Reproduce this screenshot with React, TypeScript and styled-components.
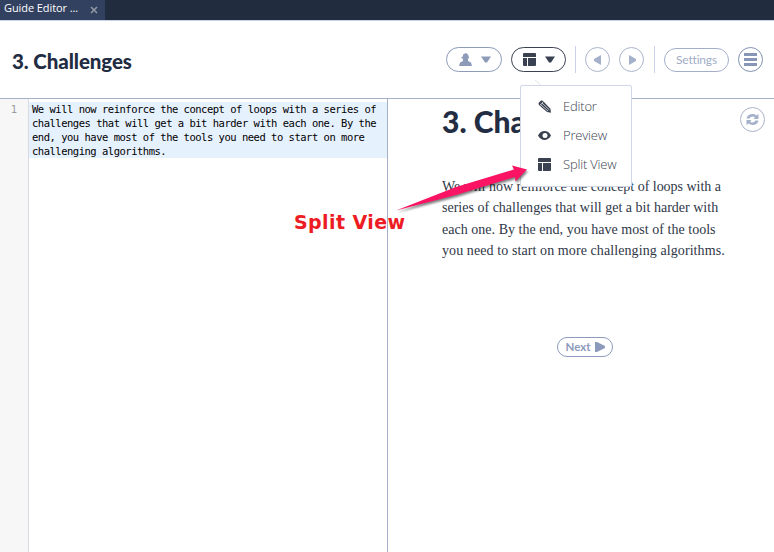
import React from "react";
import styled, { createGlobalStyle, css } from "styled-components";

const Global = createGlobalStyle`
  * { box-sizing: border-box; }
  body { margin: 0; background: #fff; overflow: hidden; }
`;

const Page = styled.div`
  position: relative;
  display: flex;
  flex-direction: column;
  width: 774px;
  height: 552px;
  background: #fff;
  font-family: "Open Sans", sans-serif;
`;

const TabBar = styled.nav`
  height: 21px;
  display: flex;
  background: #222c3f;
  border-bottom: 1px solid #c9d2ea;
`;

const Tab = styled.div`
  width: 105px;
  height: 20px;
  padding: 0 7px 4px 4px;
  display: flex;
  align-items: center;
  justify-content: space-between;
  background: #32415f;
  color: #fff;
  font-size: 11px;
  line-height: 16px;
  white-space: nowrap;
  letter-spacing: -0.08px;
`;

const CloseIcon = styled.svg`
  width: 8px;
  height: 8px;
  margin-top: 3px;
  stroke: #949aa5;
  stroke-width: 1.5;
`;

const Header = styled.header`
  height: 78px;
  padding: 0 11px 0 12px;
  display: flex;
  align-items: center;
  justify-content: space-between;
  border-bottom: 1px solid #a5b0c8;
`;

const Title = styled.h1`
  margin: 2px 0 0;
  color: #222c42;
  font: 900 20.5px/26px Lato, sans-serif;
  letter-spacing: -0.1px;
  white-space: nowrap;
`;

const Toolbar = styled.div`
  height: 27px;
  display: flex;
  align-items: center;
`;

const Pill = styled.button<{ $active?: boolean; $width: number; $gap?: number }>`
  position: relative;
  width: ${(p) => p.$width}px;
  height: 25px;
  padding: 0 0 0 1px;
  margin-right: ${(p) => p.$gap ?? 9}px;
  display: flex;
  align-items: center;
  justify-content: center;
  gap: 9px;
  border: 1px solid ${(p) => (p.$active ? "#3a4150" : "#8d9bb8")};
  border-radius: 13px;
  background: #fff;
  color: ${(p) => (p.$active ? "#3a4150" : "#8d9bb8")};
`;

const Round = styled.button<{ $gap?: number; $strong?: boolean }>`
  flex: none;
  width: 25px;
  height: 25px;
  padding: 0;
  margin-right: ${(p) => p.$gap ?? 0}px;
  display: flex;
  align-items: center;
  justify-content: center;
  border: 1px solid ${(p) => (p.$strong ? "#8290b0" : "#a9b4cb")};
  border-radius: 50%;
  background: #fff;
  color: ${(p) => (p.$strong ? "#8796b7" : "#a5b1ca")};
`;

const Divider = styled.span`
  width: 1px;
  height: 27px;
  margin-right: 9px;
  background: #c9d2ea;
`;

const outlined = css`
  padding: 0;
  border: 1px solid #a3afc8;
  background: #fff;
  color: #a0acc5;
  white-space: nowrap;
`;

const SettingsButton = styled.button`
  ${outlined}
  width: 65px;
  height: 24px;
  margin-right: 9px;
  border-radius: 12px;
  font: 400 12px/20px Lato, sans-serif;
  letter-spacing: -0.2px;
`;

const NextButton = styled.button`
  ${outlined}
  width: 56px;
  height: 20px;
  display: flex;
  align-items: center;
  justify-content: center;
  gap: 4px;
  border-color: #8c9abb;
  border-radius: 10px;
  color: #8c9abb;
  font: 700 11.5px/16px Lato, sans-serif;
`;

const Icon = styled.svg`
  display: block;
  flex: none;
  fill: currentColor;
`;

const Workspace = styled.main`
  flex: 1;
  display: flex;
`;

const Editor = styled.section`
  width: 388px;
  display: flex;
  border-right: 1px solid #a5b0c8;
`;

const Gutter = styled.div`
  width: 29px;
  padding: 3px 11px 0 0;
  border-right: 1px solid #d9dbe0;
  background: #f7f7f7;
  color: #9a9a9a;
  text-align: right;
  font: 10.5px/14px "DejaVu Sans Mono", monospace;
`;

const Code = styled.pre`
  flex: 1;
  height: 56px;
  margin: 3px 0 0;
  padding-left: 3px;
  background: #e6f1fe;
  color: #000;
  font: 10.5px/14px "DejaVu Sans Mono", monospace;
  letter-spacing: -0.49px;
`;

const Preview = styled.section`
  flex: 1;
  padding: 8px 9px 0 54px;
  display: flex;
  flex-direction: column;
`;

const PreviewTop = styled.div`
  height: 68px;
  display: flex;
  align-items: flex-start;
  justify-content: space-between;
`;

const Heading = styled.h2`
  margin: -4px 0 0;
  color: #222c42;
  font: 900 30px/36px Lato, sans-serif;
  white-space: nowrap;
`;

const Paragraph = styled.p`
  margin: 1px 0 0;
  height: 87px;
  color: #2f3747;
  font: 14px/21.4px "Liberation Serif", serif;
`;

const Line = styled.span<{ $tracking: number }>`
  display: block;
  white-space: nowrap;
  letter-spacing: ${(p) => p.$tracking}px;
`;

const NextRow = styled.div`
  display: flex;
  margin: 74px 0 0 115px;
`;

const Menu = styled.ul`
  position: absolute;
  z-index: 1;
  left: 8px;
  top: 37px;
  width: 112px;
  height: 102px;
  margin: 0;
  padding: 6px 0 0 17px;
  list-style: none;
  border: 1px solid #d1d6e7;
  border-radius: 2px;
  background: #fff;
`;

const Notch = styled.svg`
  position: absolute;
  left: 23px;
  top: 32px;
  width: 8px;
  height: 6px;
  fill: none;
  stroke: #dde1ee;
`;

const MenuItem = styled.li`
  height: 29px;
  display: grid;
  grid-template-columns: 25px 1fr;
  align-items: center;
  color: #3a4150;
  font: 300 13px/29px "Open Sans", sans-serif;
  letter-spacing: -0.2px;
  text-align: left;
  white-space: nowrap;
`;

const Callout = styled.strong`
  position: absolute;
  z-index: 2;
  left: 294px;
  top: 211px;
  color: #ed1c24;
  font: 700 19px/23px "DejaVu Sans", sans-serif;
  letter-spacing: 0.42px;
  white-space: nowrap;
`;

const Arrow = styled.svg`
  position: absolute;
  z-index: 2;
  left: 390px;
  top: 160px;
  filter: drop-shadow(1px 2px 1px rgba(0, 0, 0, 0.5));
  pointer-events: none;
`;

const Caret = () => (
  <Icon width="10" height="7" viewBox="0 0 10 7"><path d="M0 .5h10L6 6.5H4z" /></Icon>
);

const LayoutIcon = () => (
  <Icon width="13" height="13" viewBox="0 0 13 13"><path d="M1 0h11a1 1 0 0 1 1 1v3H0V1a1 1 0 0 1 1-1zM0 5h4v8H1a1 1 0 0 1-1-1zM5 5h8v7a1 1 0 0 1-1 1H5z" /></Icon>
);

const PersonIcon = () => (
  <Icon width="13" height="13" viewBox="0 0 13 13"><path d="M4 1.5L7 0l2 1.5 1 3L9 6v2l3 1.5 1 3.5H0l1-3.5L4 8V6.5L3 5l-1-1 2-.5z" /></Icon>
);

const PencilIcon = () => (
  <Icon width="13" height="13" viewBox="0 0 13 13">
    <path d="M3 .5L.5 3l.4 2L9 12l4 .7-.6-4L4.8.7z" />
    <path d="M2.5 4.5l7.5 6.6M4 3l7.3 6.8M2 5.5l3.5-4" fill="none" stroke="#fff" strokeWidth=".7" />
  </Icon>
);

const EyeIcon = () => (
  <Icon width="13" height="9" viewBox="0 0 13 9"><path fillRule="evenodd" d="M0 4.5C3-1.4 10-1.4 13 4.5 10 10.4 3 10.4 0 4.5zM7 2a2.5 2.5 0 1 0 0 5 2.5 2.5 0 0 0 0-5z" /></Icon>
);

const RefreshIcon = () => (
  <Icon width="13" height="13" viewBox="0 0 13 13">
    <path d="M.5 5.5C1 2.5 3.5 1 6.5 1c1.6 0 2.8.5 3.8 1.4L12.5 1v5H7.6l1.3-1.7C7.2 2.9 4.5 3.4 3.5 5.5zM12.5 7.5C12 10.5 9.5 12 6.5 12c-1.6 0-2.8-.5-3.8-1.4L.5 12V7h4.9L4.1 8.7c1.7 1.4 4.4.9 5.4-1.2z" />
  </Icon>
);

const codeText = `We will now reinforce the concept of loops with a series of
challenges that will get a bit harder with each one. By the
end, you have most of the tools you need to start on more
challenging algorithms.`;

const paragraph = [
  { text: "We will now reinforce the concept of loops with a", tracking: -0.02 },
  { text: "series of challenges that will get a bit harder with", tracking: 0.01 },
  { text: "each one. By the end, you have most of the tools", tracking: 0.03 },
  { text: "you need to start on more challenging algorithms.", tracking: 0.09 },
];

const views = [
  { label: "Editor", icon: <PencilIcon /> },
  { label: "Preview", icon: <EyeIcon /> },
  { label: "Split View", icon: <LayoutIcon /> },
];

export default function App() {
  return (
    <Page>
      <Global />
      <TabBar>
        <Tab>
          Guide Editor ...
          <CloseIcon viewBox="0 0 8 8"><path d="M1 1l6 6M7 1L1 7" /></CloseIcon>
        </Tab>
      </TabBar>
      <Header>
        <Title>3. Challenges</Title>
        <Toolbar>
          <Pill $width={56}><PersonIcon /><Caret /></Pill>
          <Pill as="div" $width={55} $active>
            <LayoutIcon /><Caret />
            <Menu>
              {views.map((v) => (
                <MenuItem key={v.label}>{v.icon}{v.label}</MenuItem>
              ))}
            </Menu>
            <Notch viewBox="0 0 8 6"><path d="M0 0l6 5.5" /></Notch>
          </Pill>
          <Divider />
          <Round $gap={9}><Icon width="8" height="10" viewBox="0 0 8 10"><path d="M7 0v10L0 6V4z" /></Icon></Round>
          <Round $gap={10}><Icon width="8" height="10" viewBox="0 0 8 10"><path d="M1 0v10l7-4V4z" /></Icon></Round>
          <Divider />
          <SettingsButton>Settings</SettingsButton>
          <Round $strong><Icon width="13" height="13" viewBox="0 0 13 13"><path d="M0 0h13v3H0zM0 5h13v3H0zM0 10h13v3H0z" /></Icon></Round>
        </Toolbar>
      </Header>
      <Workspace>
        <Editor>
          <Gutter>1</Gutter>
          <Code>{codeText}</Code>
        </Editor>
        <Preview>
          <PreviewTop>
            <Heading>3. Challenges</Heading>
            <Round><RefreshIcon /></Round>
          </PreviewTop>
          <Paragraph>
            {paragraph.map((l) => <Line key={l.text} $tracking={l.tracking}>{l.text}</Line>)}
          </Paragraph>
          <NextRow>
            <NextButton>
              Next
              <Icon width="10" height="10" viewBox="0 0 10 10"><path d="M0 0h2l8 4v2l-8 4H0z" /></Icon>
            </NextButton>
          </NextRow>
        </Preview>
      </Workspace>
      <Callout>Split View</Callout>
      <Arrow width="144" height="58" viewBox="0 0 144 58">
        <path d="M6 50.5L66 27 124 9.5 122 5.5l15 4-11.5 12-.5-4.5L66 35z" fill="#fb1464" />
      </Arrow>
    </Page>
  );
}
